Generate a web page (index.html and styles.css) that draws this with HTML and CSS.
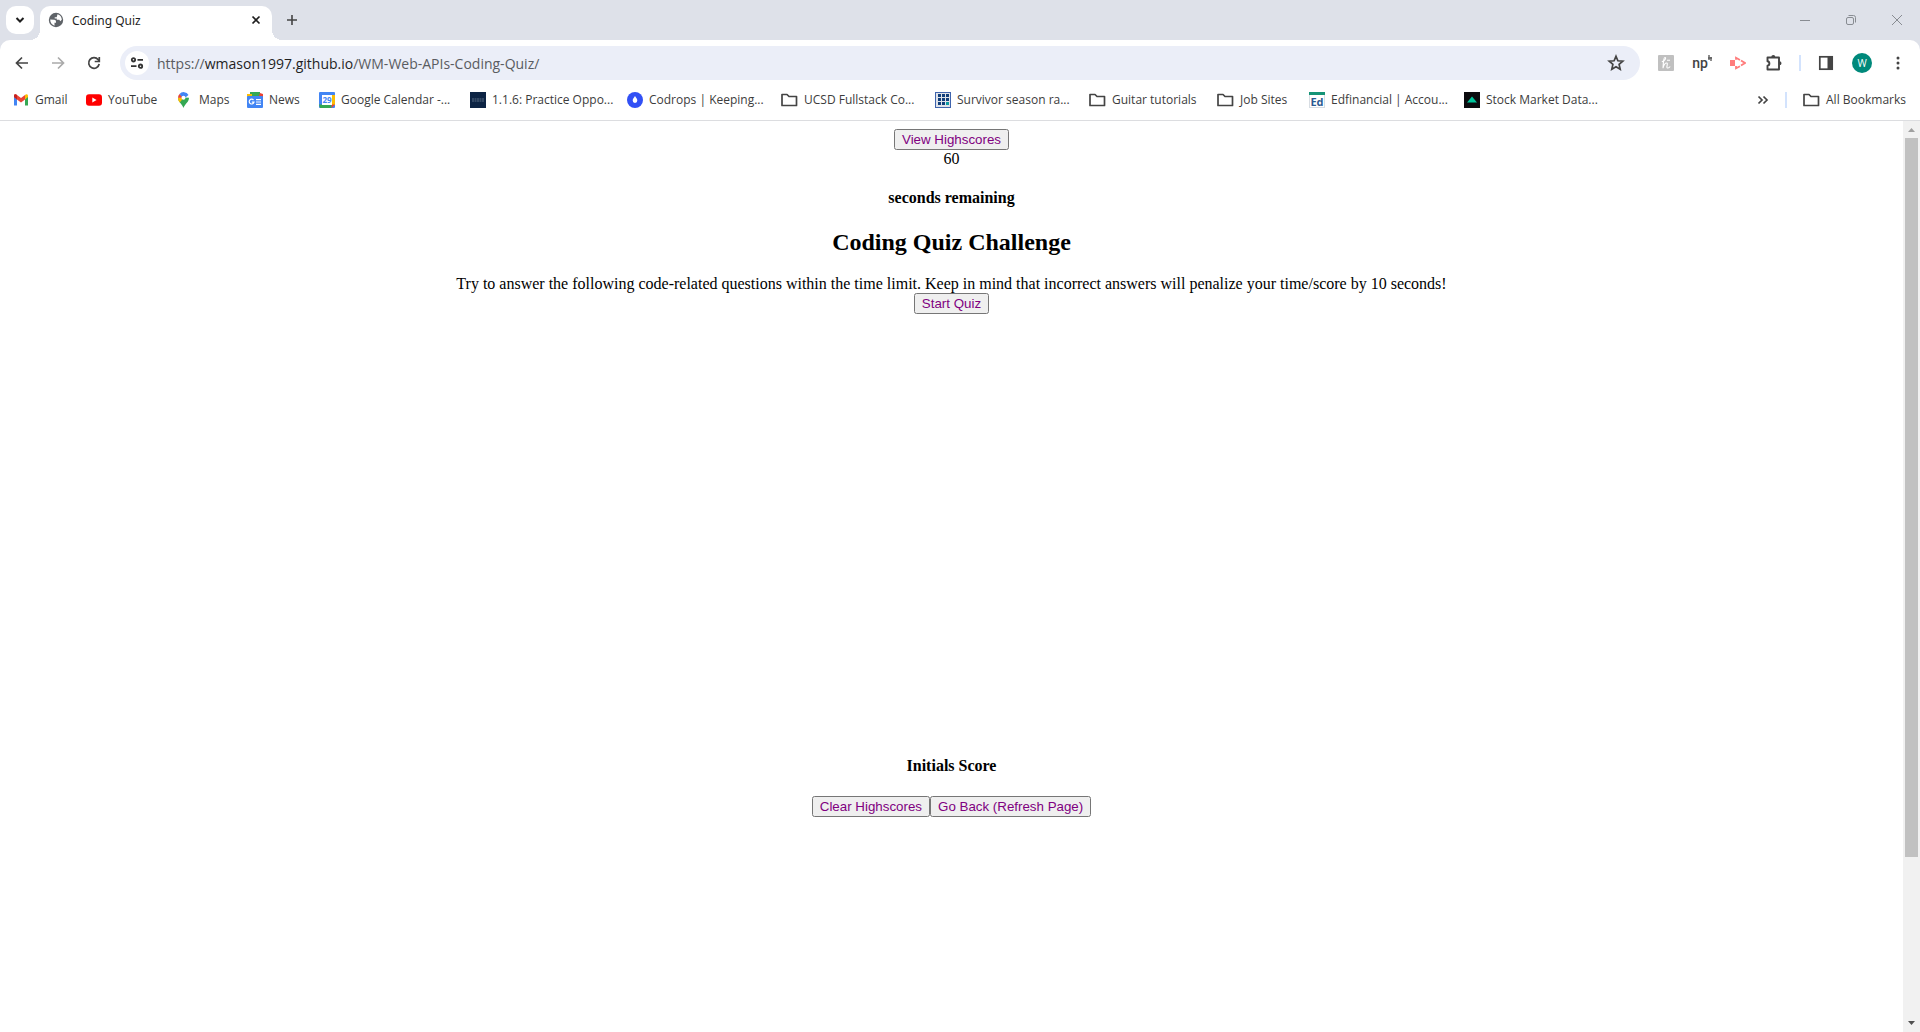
FILE: index.html
```html
<!DOCTYPE html>
<html lang="en">
<head>
<meta charset="utf-8">
<title>Coding Quiz</title>
<link rel="stylesheet" href="styles.css">
</head>
<body>
<header class="browser">
  <div class="tabstrip">
    <button class="tab-search" aria-label="Search tabs"><svg width="10" height="10" viewBox="0 0 10 10"><path d="M1.5 3l3.5 3.5L8.500 3" fill="none" stroke="#1f1f1f" stroke-width="2"/></svg></button>
    <div class="tab">
      <svg width="16" height="16" viewBox="0 0 16 16"><circle cx="8" cy="8" r="7.200" fill="#5f6368"/><path d="M2.200 7.500l4 .3c1.300.2 1.800.8 1.800 1.900v1H6.500v3C4 12.800 2 10.500 2.200 7.500zM9.500 2.300c2.800.6 4.300 3 4.300 5.500l-1.500 1.400-1-1.400H8.800V6.500H6.700V5.200h2z" fill="#fff"/></svg>
      <span class="tab-title">Coding Quiz</span>
      <button class="tab-close" aria-label="Close tab"><svg width="10" height="10" viewBox="0 0 10 10"><path d="M1.500 1.500l7 7m0-7l-7 7" stroke="#1f1f1f" stroke-width="1.700"/></svg></button>
    </div>
    <button class="icon-button new-tab" aria-label="New tab"><svg width="12" height="12" viewBox="0 0 12 12"><path d="M6 1v10M1 6h10" stroke="#444" stroke-width="1.600"/></svg></button>
    <div class="window-controls">
      <button aria-label="Minimize"><svg width="10" height="10" viewBox="0 0 10 10"><path d="M0 5.500h10" stroke="#888c92"/></svg></button>
      <button aria-label="Restore"><svg width="10" height="10" viewBox="0 0 10 10" fill="none" stroke="#888c92"><rect x=".5" y="2.500" width="7" height="7" rx="1.500"/><path d="M2.500.5h5a2 2 0 0 1 2 2v5"/></svg></button>
      <button aria-label="Close"><svg width="10" height="10" viewBox="0 0 10 10"><path d="M0 0l10 10M10 0L0 10" stroke="#888c92"/></svg></button>
    </div>
  </div>
  <div class="toolbar">
    <nav class="nav-buttons">
      <button class="icon-button" aria-label="Back"><svg width="16" height="16" viewBox="0 0 16 16"><path d="M14 8H3M8 2.500L2.500 8 8 13.500" fill="none" stroke="#444" stroke-width="1.700"/></svg></button>
      <button class="icon-button" aria-label="Forward"><svg width="16" height="16" viewBox="0 0 16 16"><path d="M2 8h11M8 2.500L13.500 8 8 13.500" fill="none" stroke="#aaa" stroke-width="1.700"/></svg></button>
      <button class="icon-button" aria-label="Reload"><svg width="16" height="16" viewBox="0 0 16 16"><path d="M13.200 9A5.300 5.300 0 1 1 12.200 4.700L13.500 6M13.300 2v4.500H8.700" fill="none" stroke="#444" stroke-width="1.700"/></svg></button>
    </nav>
    <div class="omnibox">
      <button class="site-info" aria-label="Site information"><svg width="14" height="12" viewBox="0 0 14 12" fill="none" stroke="#333" stroke-width="1.800"><circle cx="3.500" cy="2.800" r="1.700"/><path d="M7.500 2.800H13M1 9.200h5.500"/><circle cx="10.500" cy="9.200" r="1.700"/></svg></button>
      <div class="url" role="textbox" aria-label="Address"><span class="dim">https://</span>wmason1997.github.io<span class="dim">/WM-Web-APIs-Coding-Quiz/</span></div>
      <button class="icon-button star" aria-label="Bookmark this page"><svg width="18" height="18" viewBox="0 0 18 18"><path d="M9 2.300l1.900 4.500 4.900.4-3.700 3.200 1.100 4.800L9 12.700l-4.200 2.500 1.100-4.800-3.700-3.200 4.900-.4z" fill="none" stroke="#444" stroke-width="1.700"/></svg></button>
    </div>
    <div class="extensions">
      <button class="icon-button" aria-label="Honey"><svg width="16" height="16" viewBox="0 0 16 16"><rect width="16" height="16" rx="1" fill="#c0c0c0"/><path d="M3.800 6.800C7 6 8.500 2.700 7 2.500S5.300 9 5 13.200C5.700 10 7.500 8 8.700 8s.3 2.500.2 4 1.700 1.300 3.300-.5M9 5.300h3" fill="none" stroke="#fff" stroke-width="1.100"/></svg></button>
      <button class="icon-button np" aria-label="np extension">np<svg width="4" height="8" viewBox="0 0 4 8"><path d="M1 0v5M0 3h4M3 2v4" stroke="#444" stroke-width="1.200"/></svg></button>
      <button class="icon-button" aria-label="Screen recorder"><svg width="16" height="16" viewBox="0 0 16 16"><rect y="5" width="5" height="6" fill="#ff7c7c"/><path d="M6 4.800V2.800L10 5M11 5.500L15 8l-4 2.500M10 11.200l-4 2V11" fill="none" stroke="#ff7c7c" stroke-width="1.800"/></svg></button>
      <button class="icon-button" aria-label="Extensions"><svg width="18" height="18" viewBox="0 0 18 18"><path d="M2.500 3.500h11.500V15.500h-11.500v-3.800c2.500-.4 2.500-4 0-4.400z" fill="none" stroke="#444" stroke-width="1.900" stroke-linejoin="round"/><path d="M6.300 3a2 2 0 0 1 4 0zM14.500 7.300a2 2 0 0 1 0 4z" fill="#444"/></svg></button>
      <span class="divider"></span>
      <button class="icon-button" aria-label="Side panel"><svg width="16" height="16" viewBox="0 0 16 16"><rect x="1.800" y="1.800" width="12.400" height="12.400" fill="none" stroke="#444" stroke-width="1.700"/><path d="M9.500 1.500H14v13H9.500z" fill="#444"/></svg></button>
      <button class="avatar" aria-label="Profile">W</button>
      <button class="icon-button" aria-label="Menu"><svg width="16" height="16" viewBox="0 0 16 16" fill="#444"><circle cx="8" cy="3" r="1.500"/><circle cx="8" cy="8" r="1.500"/><circle cx="8" cy="13" r="1.500"/></svg></button>
    </div>
  </div>
  <nav class="bookmarks" aria-label="Bookmarks">
    <div class="bookmark-list">
      <a href="#"><svg width="16" height="16" viewBox="0 0 16 16"><path d="M1 4v9.500h3V7z" fill="#4285f4"/><path d="M15 4v9.500h-3V7z" fill="#34a853"/><path d="M1 3.500C1 2 3 2 4 3l4 3 4-3v4.500L8 10.500 4 7.500 1 5z" fill="#ea4335"/><path d="M12 3c1-1 3-1 3 1v1l-3 2.500z" fill="#fbbc04"/><path d="M1 4v1l3 2.500V3C3 2 1 2 1 4z" fill="#c5221f"/></svg>Gmail</a>
      <a href="#"><svg width="16" height="16" viewBox="0 0 16 16"><rect y="2.300" width="16" height="11.500" rx="3" fill="#f00"/><path d="M6.300 5.600v5l4.300-2.500z" fill="#fff"/></svg>YouTube</a>
      <a href="#"><svg width="16" height="16" viewBox="0 0 16 16"><path d="M6.500 16C5.500 12.500 1 10 1 5.800L6.500 5.500l5.500.3C12 10 7.500 12.500 6.500 16z" fill="#34a853"/><path d="M1 5.800c0 2 .7 3.400 1.800 4.800L6.500 5.800z" fill="#fbbc04"/><path d="M1 5.800A5.500 5.500 0 0 1 2.500 2l4 3.800z" fill="#ea4335"/><path d="M2.500 2a5.500 5.500 0 0 1 9 1L6.500 7z" fill="#4285f4"/><circle cx="6.500" cy="5.700" r="2" fill="#fff"/></svg>Maps</a>
      <a href="#"><svg width="16" height="16" viewBox="0 0 16 16"><path d="M3 0h10v5H3z" fill="#34a853"/><path d="M0 2h5v4H0z" fill="#fbbc04"/><path d="M13 1l3 1v4h-5z" fill="#ea4335"/><rect y="4" width="16" height="12" rx="1" fill="#4285f4"/><path d="M6.500 8a2.400 2.400 0 1 0 .5 2.200H4.800M9 7.700h5M9 10h5M9 12.300h5" fill="none" stroke="#fff" stroke-width="1.200"/></svg>News</a>
      <a href="#"><svg width="16" height="16" viewBox="0 0 16 16"><rect width="16" height="16" rx="1" fill="#4285f4"/><path d="M12.500 3H16v10h-3.500z" fill="#fbbc04"/><path d="M0 12.500h12.500V16H1z" fill="#34a853"/><path d="M12.500 12.500H16L12.500 16z" fill="#ea4335"/><path d="M3 3h10v10H3z" fill="#fff"/><text x="8" y="11" class="glyph calendar-day">29</text></svg>Google Calendar -...</a>
      <a href="#"><svg width="16" height="16" viewBox="0 0 16 16"><rect width="16" height="16" fill="#0d2444"/><path d="M2 7h12M2 9h12" stroke="#5a6c84" stroke-dasharray="2 .5"/></svg>1.1.6: Practice Oppo...</a>
      <a href="#"><svg width="16" height="16" viewBox="0 0 16 16"><circle cx="8" cy="8" r="8" fill="#3150f5"/><path d="M8 4c1 1.800 2.300 2.800 2.300 4.600a2.300 2.300 0 0 1-4.600 0C5.700 6.800 7 5.800 8 4z" fill="#fff"/></svg>Codrops | Keeping...</a>
      <a href="#"><svg class="folder" width="17" height="16" viewBox="0 0 17 16"><path d="M1 2.500h5l2 2h7.500v9H1z"/></svg>UCSD Fullstack Co...</a>
      <a href="#"><svg width="16" height="16" viewBox="0 0 16 16"><rect x=".5" y=".5" width="15" height="15" fill="#dfe3ea" stroke="#4064ad"/><path d="M3 2h3v3H3zM7 2h3v3H7zM11 2h3v3h-3zM3 6h3v3H3zM7 6h3v3H7zM11 6h3v3h-3zM3 10h3v3H3zM7 10h3v3H7z" fill="#123f7b"/><path d="M11 10h3v3h-3z" fill="#0a9aa0"/></svg>Survivor season ra...</a>
      <a href="#"><svg class="folder" width="17" height="16" viewBox="0 0 17 16"><path d="M1 2.500h5l2 2h7.500v9H1z"/></svg>Guitar tutorials</a>
      <a href="#"><svg class="folder" width="17" height="16" viewBox="0 0 17 16"><path d="M1 2.500h5l2 2h7.500v9H1z"/></svg>Job Sites</a>
      <a href="#"><svg width="16" height="16" viewBox="0 0 16 16"><rect x=".5" y=".5" width="15" height="15" fill="#fff" stroke="#d7dde3"/><path d="M0 0h16v3H0z" fill="#159477"/><text x="8" y="14" class="glyph ed">Ed</text></svg>Edfinancial | Accou...</a>
      <a href="#"><svg width="16" height="16" viewBox="0 0 16 16"><rect width="16" height="16" fill="#0b0b0e"/><path d="M8 4.500l5 6H3z" fill="#00c49a"/></svg>Stock Market Data...</a>
    </div>
    <div class="bookmark-end">
      <button class="icon-button" aria-label="More bookmarks"><svg width="12" height="10" viewBox="0 0 12 10"><path d="M1.500 1.500L5 5 1.500 8.500M6.500 1.500L10 5 6.500 8.500" fill="none" stroke="#444" stroke-width="1.700"/></svg></button>
      <span class="divider"></span>
      <a href="#"><svg class="folder" width="17" height="16" viewBox="0 0 17 16"><path d="M1 2.500h5l2 2h7.500v9H1z"/></svg>All Bookmarks</a>
    </div>
  </nav>
</header>
<div class="viewport">
  <main class="quiz">
    <button>View Highscores</button>
    <div>60</div>
    <h4>seconds remaining</h4>
    <h2>Coding Quiz Challenge</h2>
    <div>Try to answer the following code-related questions within the time limit. Keep in mind that incorrect answers will penalize your time/score by 10 seconds!</div>
    <button>Start Quiz</button>
    <section class="highscores">
      <h4>Initials Score</h4>
      <div class="actions"><button>Clear Highscores</button><button>Go Back (Refresh Page)</button></div>
    </section>
  </main>
  <div class="scrollbar" aria-hidden="true">
    <svg width="17" height="17" viewBox="0 0 17 17"><path d="M5 11h7L8.500 7z" fill="#a0a0a0"/></svg>
    <div class="track"><div class="thumb"></div></div>
    <svg width="17" height="17" viewBox="0 0 17 17"><path d="M5 6h7l-3.500 4z" fill="#505050"/></svg>
  </div>
</div>
</body>
</html>
```
FILE: styles.css
```css
* { box-sizing: border-box; }
body {
  margin: 0;
  min-height: 100vh;
  display: flex;
  flex-direction: column;
  background: #fff;
  font-family: "Liberation Serif", "Times New Roman", serif;
  font-size: 16px;
}
svg { display: block; flex: none; }

/* Browser chrome */
.browser {
  background: #dee1e9;
  border-bottom: 1px solid #dcdde0;
  font-family: "Open Sans", "Noto Sans", sans-serif;
  font-size: 12px;
  color: #3c3c3c;
}
.browser button {
  padding: 0;
  border: 0;
  background: none;
  font-family: inherit;
  display: flex;
  align-items: center;
  justify-content: center;
}
.browser a { color: inherit; text-decoration: none; }
.icon-button { width: 28px; height: 28px; }

.tabstrip { display: flex; height: 40px; padding: 6px 0 0 6px; }
.browser .tab-search { width: 28px; height: 28px; border-radius: 10px; background: #fff; }
.tab {
  position: relative;
  display: flex;
  align-items: center;
  width: 232px;
  margin-left: 6px;
  padding: 0 8px 6px 8px;
  border-radius: 10px 10px 0 0;
  background: #fff;
  color: #1f1f1f;
}
.tab::before, .tab::after {
  content: "";
  position: absolute;
  bottom: 0;
  width: 10px;
  height: 10px;
}
.tab::before { right: 100%; background: radial-gradient(circle at 0 0, transparent 10px, #fff 10px); }
.tab::after { left: 100%; background: radial-gradient(circle at 100% 0, transparent 10px, #fff 10px); }
.tab-title { flex: 1; margin-left: 8px; font-family: "Noto Sans", sans-serif; font-size: 12px; }
.browser .tab-close { width: 16px; height: 16px; }
.new-tab { margin-left: 6px; }
.window-controls { display: flex; margin-left: auto; height: 28px; }
.window-controls button { width: 46px; }

.toolbar {
  display: flex;
  align-items: center;
  height: 46px;
  padding: 0 8px;
  border-radius: 10px 10px 0 0;
  background: #fff;
}
.nav-buttons { display: flex; gap: 8px; }
.omnibox {
  flex: 1;
  display: flex;
  align-items: center;
  height: 34px;
  margin: 0 12px;
  padding: 0 10px 0 5px;
  border-radius: 17px;
  background: #ebeef8;
}
.browser .site-info { width: 24px; height: 24px; border-radius: 50%; background: #fff; }
.url { flex: 1; margin-left: 8px; font-size: 14px; color: #1f1f1f; }
.dim { color: #5a5c61; }
.extensions { display: flex; align-items: center; gap: 8px; }
.divider { width: 2px; height: 16px; margin: 0 3px; background: #d3e3fd; }
.browser .np { font-family: Roboto, sans-serif; font-size: 14px; font-weight: 500; color: #444; }
.np svg { margin-bottom: 8px; }
.browser .avatar { width: 20px; height: 20px; margin: 0 4px; border-radius: 50%; background: #00897b; color: #fff; font-size: 10px; }

.bookmarks {
  display: flex;
  align-items: center;
  justify-content: space-between;
  height: 34px;
  padding: 0 14px 7px 13px;
  background: #fff;
}
.bookmark-list {
  display: grid;
  grid-template-columns: 73px 91px 70px 72px 151px 157px 154px 154px 154px 128px 92px 155px auto;
}
.bookmarks a { display: flex; align-items: center; gap: 6px; white-space: nowrap; }
.bookmark-end { display: flex; align-items: center; gap: 5px; }
.bookmark-end a { margin-left: 8px; }
.folder { fill: none; stroke: #444; stroke-width: 1.7; stroke-linejoin: round; }
.glyph { font-family: "Open Sans", sans-serif; font-weight: 700; text-anchor: middle; }
.calendar-day { font-size: 8px; fill: #4285f4; }
.ed { font-size: 11px; fill: #2b5a92; }

/* Page content */
.viewport { flex: 1; display: flex; }
.quiz {
  flex: 1;
  display: flex;
  flex-direction: column;
  align-items: center;
  padding: 8px;
  text-align: center;
  color: #000;
}
.quiz button {
  color: purple;
  font-family: "Liberation Sans", Arial, sans-serif;
}
.quiz h4 { margin: 21px 0; line-height: 18px; }
.quiz h2 { margin: 0 0 19px; font-size: 24px; line-height: 28px; }
.quiz div { line-height: 18px; }
.highscores { margin-top: 422px; }
.highscores .actions { display: flex; }

.scrollbar { display: flex; flex-direction: column; width: 17px; background: #f1f1f1; }
.track { flex: 1; padding: 0 2px; }
.thumb { height: 82%; background: #c1c1c1; }
```
